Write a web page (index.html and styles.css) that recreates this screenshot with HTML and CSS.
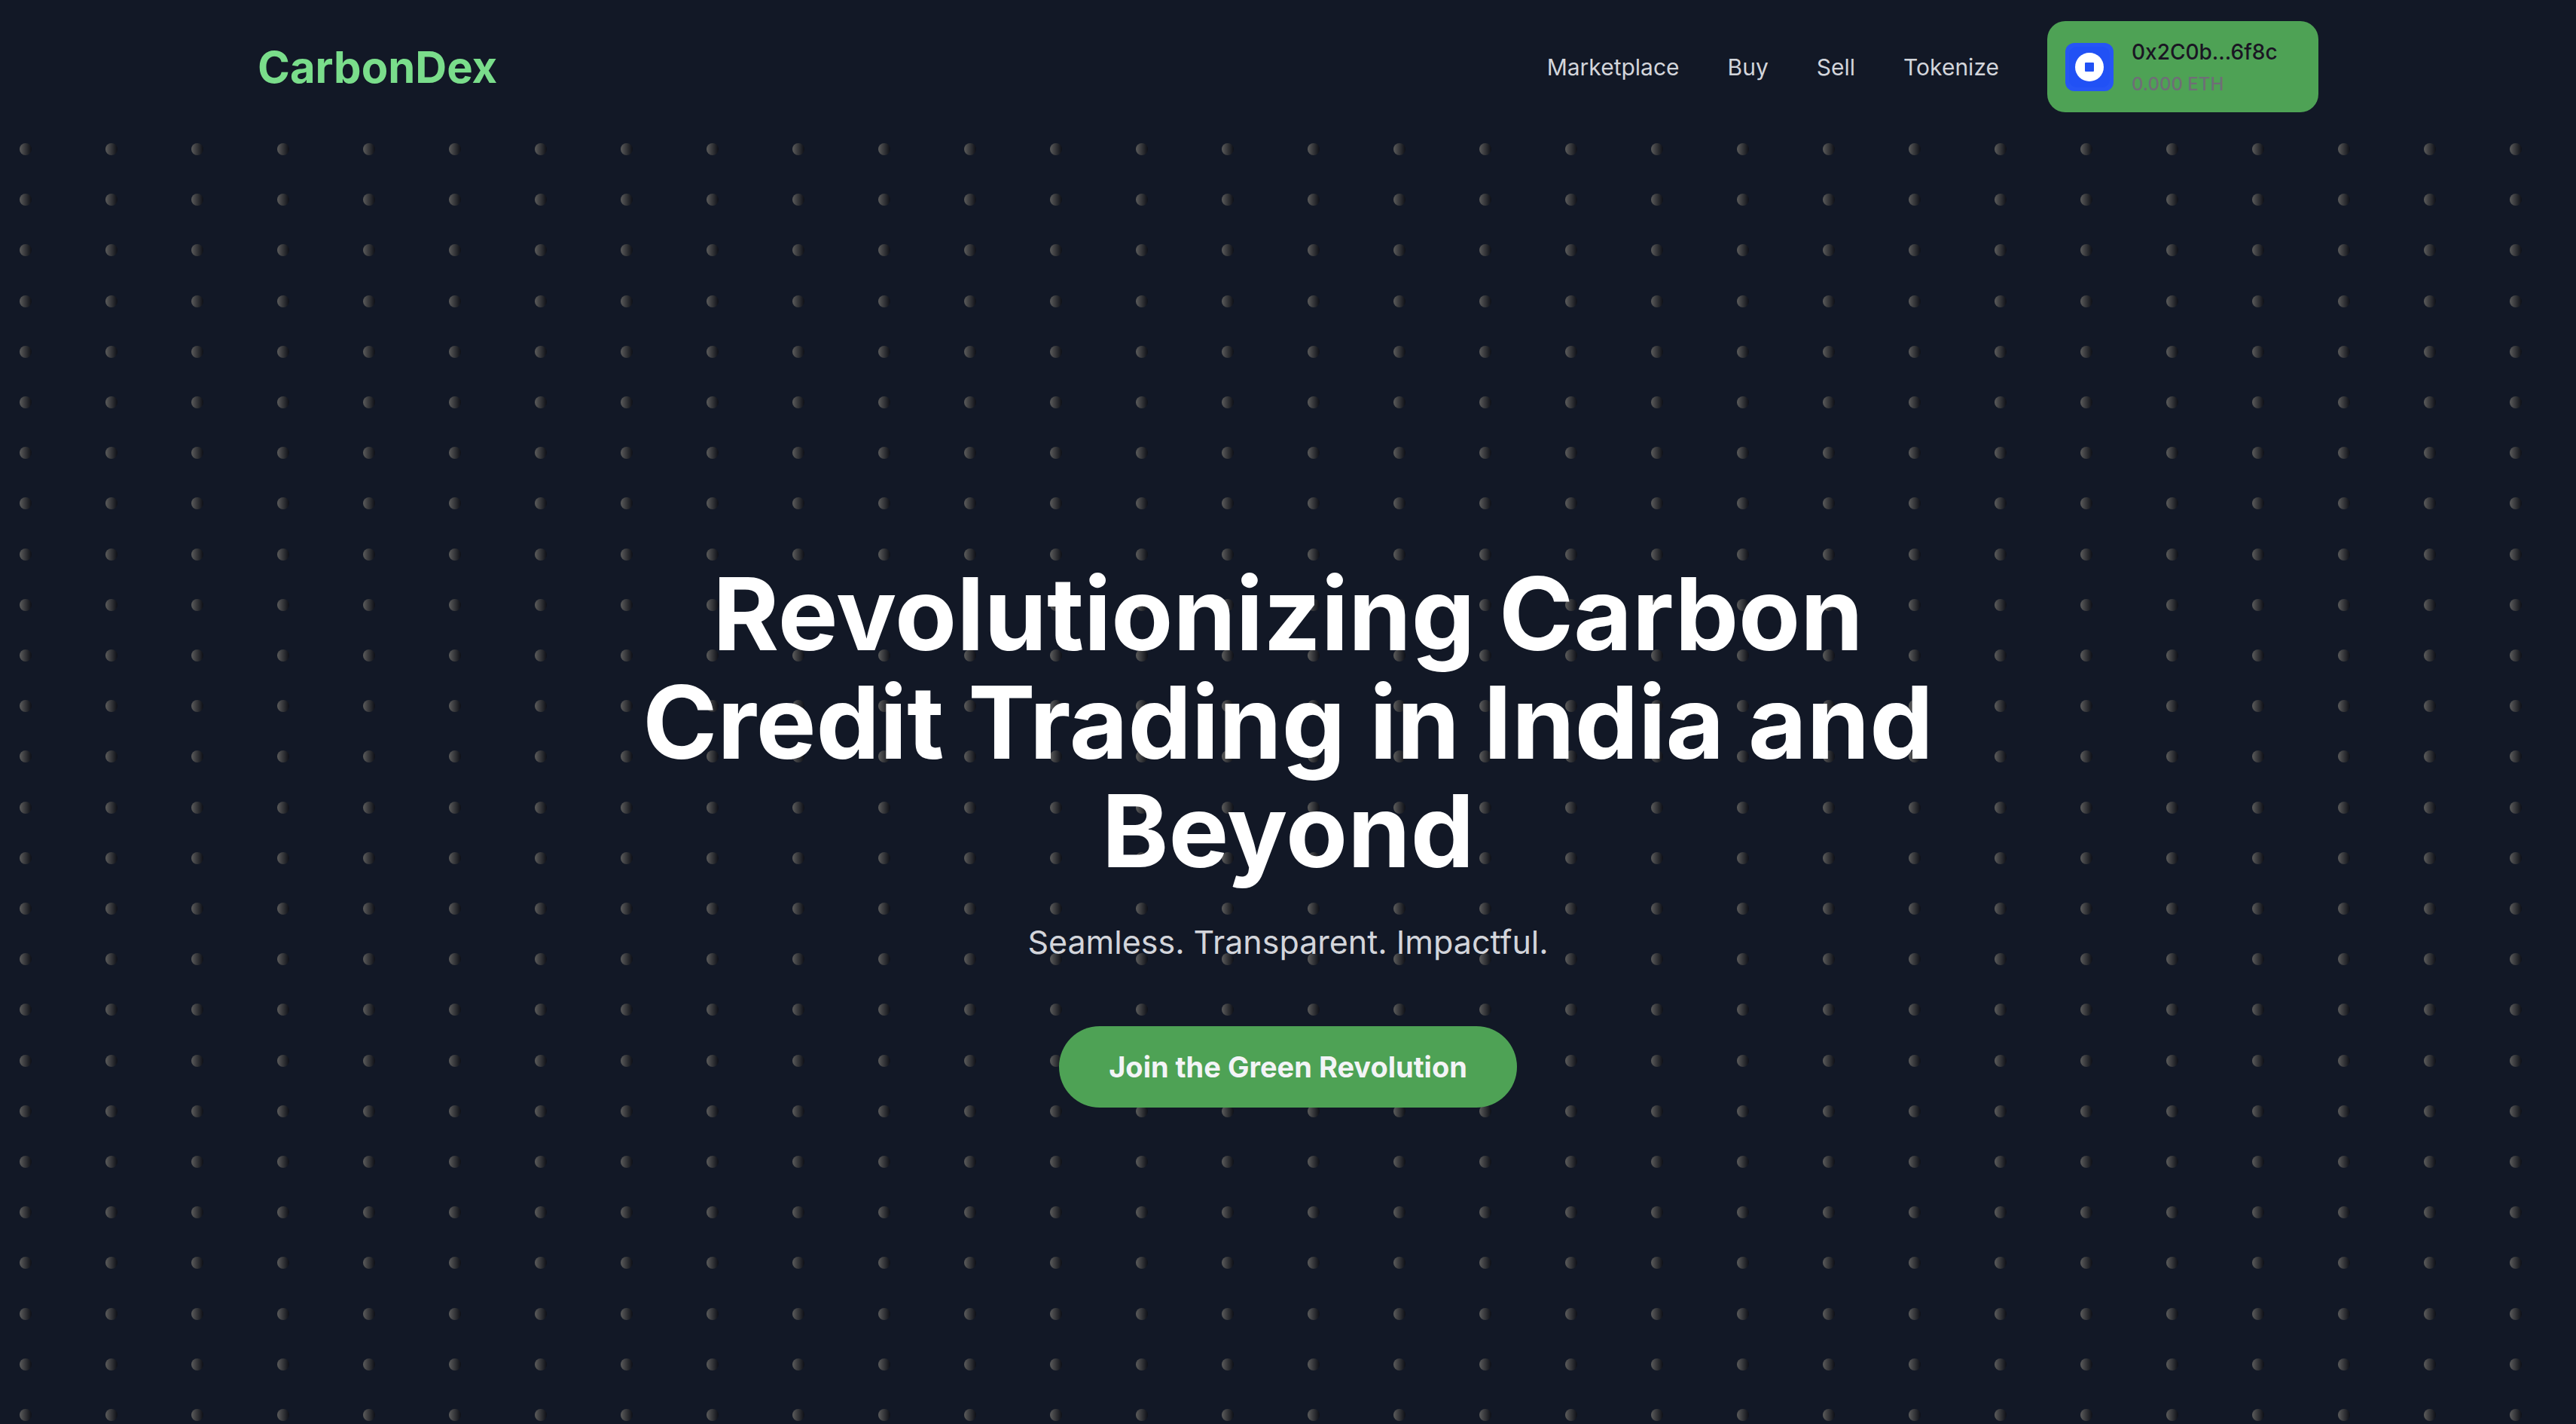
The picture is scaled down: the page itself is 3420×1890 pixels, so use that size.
FILE: index.html
```html
<!DOCTYPE html>
<html lang="en">
<head>
  <meta charset="utf-8">
  <meta name="viewport" content="width=device-width, initial-scale=1">
  <title>CarbonDex</title>
  <link rel="stylesheet" href="styles.css">
</head>
<body>
  <header class="site-header">
    <a class="logo" href="#">CarbonDex</a>
    <nav class="site-nav" aria-label="Main">
      <a class="nav-link" href="#">Marketplace</a>
      <a class="nav-link" href="#">Buy</a>
      <a class="nav-link" href="#">Sell</a>
      <a class="nav-link" href="#">Tokenize</a>
      <button class="wallet" type="button">
        <svg class="wallet-icon" viewBox="0 0 64 64" aria-hidden="true">
          <rect width="64" height="64" rx="12" fill="#2655f5"/>
          <rect x="5" y="5" width="54" height="54" rx="10" fill="#2151f5"/>
          <circle cx="32" cy="32" r="19" fill="#fff"/>
          <rect x="26" y="26" width="12" height="12" rx="1" fill="#2151f5"/>
        </svg>
        <span class="wallet-text">
          <span class="wallet-address">0x2C0b...6f8c</span>
          <span class="wallet-balance">0.000 ETH</span>
        </span>
      </button>
    </nav>
  </header>

  <main class="hero">
    <svg class="hero-dots" aria-hidden="true">
      <defs>
        <linearGradient id="dot-shade">
          <stop offset="0" stop-color="#5c5c5c"/>
          <stop offset="1" stop-color="#0d0f16"/>
        </linearGradient>
        <pattern id="dots" x="26" y="13" width="114" height="336" patternUnits="userSpaceOnUse">
          <g fill="url(#dot-shade)">
            <circle cx="8" cy="8" r="8"/>
            <circle cx="8" cy="75" r="8"/>
            <circle cx="8" cy="142" r="8"/>
            <circle cx="8" cy="210" r="8"/>
            <circle cx="8" cy="277" r="8"/>
          </g>
        </pattern>
      </defs>
      <rect width="100%" height="100%" fill="url(#dots)"/>
    </svg>
    <div class="hero-content">
      <h1 class="hero-title">Revolutionizing Carbon Credit Trading in India and Beyond</h1>
      <p class="hero-tagline">Seamless. Transparent. Impactful.</p>
      <button class="cta" type="button">Join the Green Revolution</button>
    </div>
  </main>
</body>
</html>
```
FILE: styles.css
```css
:root {
  --page: #121826;
  --green: #4ea255;
  --green-light: #7add8b;
  --text: #d3d5db;
}

* {
  box-sizing: border-box;
}

body {
  margin: 0;
  min-height: 100vh;
  display: flex;
  flex-direction: column;
  background: var(--page);
  color: var(--text);
  font-family: Inter, "Liberation Sans", sans-serif;
}

a {
  color: inherit;
  text-decoration: none;
}

button {
  border: 0;
  font: inherit;
  cursor: pointer;
}

.site-header {
  display: flex;
  align-items: center;
  justify-content: space-between;
  padding: 28px 10%;
}

.logo {
  color: var(--green-light);
  font-size: 58px;
  font-weight: 700;
  line-height: 72px;
}

.site-nav {
  display: flex;
  align-items: center;
  gap: 64px;
}

.nav-link {
  font-size: 30px;
  line-height: 48px;
}

.wallet {
  display: flex;
  align-items: center;
  gap: 24px;
  min-width: 360px;
  padding: 18px 24px 17px;
  border-radius: 24px;
  background: var(--green);
  text-align: left;
}

.wallet-icon {
  width: 64px;
  height: 64px;
}

.wallet-text {
  display: flex;
  flex-direction: column;
}

.wallet-address {
  color: #1a1523;
  font-size: 28px;
  font-weight: 500;
  line-height: 46px;
}

.wallet-balance {
  color: #6f6e77;
  font-size: 24px;
  font-weight: 500;
  line-height: 40px;
}

.hero {
  position: relative;
  flex: 1;
  display: flex;
  align-items: center;
  justify-content: center;
  padding-top: 144px;
}

.hero-dots {
  position: absolute;
  inset: 0;
  width: 100%;
  height: 100%;
}

.hero-content {
  position: relative;
  max-width: 1792px;
  text-align: center;
}

.hero-title {
  margin: 0 0 48px;
  color: #fff;
  font-size: 134px;
  font-weight: 700;
  line-height: 144px;
}

.hero-tagline {
  margin: 0 0 84px;
  font-size: 43px;
  line-height: 56px;
}

.cta {
  display: block;
  margin: 0 auto;
  padding: 26px 66px;
  border-radius: 54px;
  background: var(--green);
  color: #f3f4f6;
  font-size: 38px;
  font-weight: 700;
  line-height: 56px;
}
```
